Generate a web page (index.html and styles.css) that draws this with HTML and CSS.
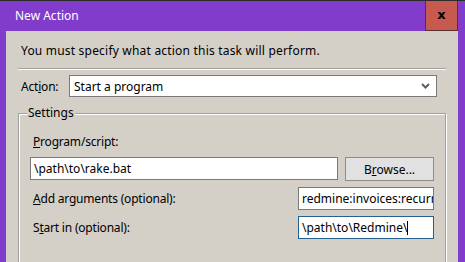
FILE: index.html
```html
<!DOCTYPE html>
<html>
<head>
  <link rel="stylesheet" href="styles.css">
</head>
<body>
  <div class="window">
    <div class="titlebar">
      <span class="title">New Action</span>
      <div class="close">x</div>
    </div>
    <div class="client">
      <p class="intro">You must specify what action this task will perform.</p>
      <div class="rule"></div>
      <div class="action-row">
        <span class="label">Act<u>i</u>on:</span>
        <div class="combo">
          <span>Start a program</span>
          <svg width="9" height="6" viewBox="0 0 9 6"><path d="M1 1 L4.5 4.5 L8 1" fill="none" stroke="#606060" stroke-width="2"/></svg>
        </div>
      </div>
      <fieldset class="settings">
        <legend>Settings</legend>
        <div class="label"><u>P</u>rogram/script:</div>
        <div class="row">
          <div class="field wide">\path\to\rake.bat</div>
          <button class="browse">B<u>r</u>owse...</button>
        </div>
        <div class="row">
          <span class="label"><u>A</u>dd arguments (optional):</span>
          <div class="field short">redmine:invoices:recurring</div>
        </div>
        <div class="row">
          <span class="label">S<u>t</u>art in (optional):</span>
          <div class="field short focus">\path\to\Redmine\<span class="caret"></span></div>
        </div>
      </fieldset>
    </div>
  </div>
</body>
</html>
```
FILE: styles.css
```css
html, body {
  margin: 0;
  height: 100%;
}

body {
  font-family: "Noto Sans", sans-serif;
  font-size: 12px;
  color: #000;
  background: #823ccb;
  overflow: hidden;
}

.window {
  display: flex;
  flex-direction: column;
  height: 100%;
  border-top: 1px solid #2b2b2b;
  box-sizing: border-box;
}

.titlebar {
  display: flex;
  justify-content: space-between;
  align-items: center;
  height: 30px;
  padding-left: 15px;
  padding-right: 7px;
}

.title {
  color: #fff;
  line-height: 16px;
  padding-bottom: 1px;
}

.close {
  align-self: flex-start;
  width: 31px;
  height: 26px;
  padding-bottom: 3px;
  background: #c65a4f;
  border: 1px solid #5b3030;
  border-top: none;
  display: flex;
  align-items: center;
  justify-content: center;
  font-family: "DejaVu Sans", sans-serif;
  font-weight: bold;
  font-size: 13px;
  line-height: 1;
}

.client {
  flex: 1;
  margin: 0 7px 0 6px;
  background: #d4d0c8;
  padding: 12px 12px 0 12px;
}

.intro {
  margin: 0 0 0 3px;
  line-height: 16px;
  letter-spacing: 0.2px;
}

.rule {
  margin-top: 9px;
  height: 0;
  border-top: 1px solid #a0a0a0;
  border-bottom: 1px solid #fff;
}

.action-row {
  display: flex;
  align-items: center;
  margin-top: 5px;
  padding-left: 3px;
  padding-right: 9px;
}

.action-row .label {
  width: 48px;
}

.combo {
  flex: 1;
  height: 20px;
  background: #fff;
  border: 1px solid #7a7a7a;
  display: flex;
  align-items: center;
  justify-content: space-between;
  padding: 0 6px 0 4px;
}

.settings {
  margin: 8px 0 0 0;
  padding: 13px 12px 30px 11px;
  border: 1px solid #a0a0a0;
  box-shadow: inset 1px 1px 0 #fff, 1px 1px 0 #fff;
  min-width: 0;
}

.settings legend {
  padding: 0 1px;
  margin-left: -3px;
  line-height: 16px;
  background: #d4d0c8;
}

.settings > .label {
  line-height: 16px;
  padding-left: 3px;
}

.label {
  letter-spacing: -0.2px;
}

.row {
  display: flex;
  align-items: center;
  justify-content: space-between;
  margin-top: 6px;
}

.row:first-of-type {
  margin-top: 5px;
}

.row .label {
  padding-left: 3px;
}

.field {
  height: 21px;
  line-height: 21px;
  background: #fff;
  border: 1px solid #7a7a7a;
  padding: 0 3px;
  white-space: nowrap;
  overflow: hidden;
  box-sizing: content-box;
}

.wide {
  width: 300px;
}

.short {
  width: 128px;
  margin-right: -1px;
}

.focus {
  border-color: #26608f;
}

.caret {
  display: inline-block;
  width: 1px;
  height: 14px;
  background: #000;
  vertical-align: -3px;
}

.browse {
  width: 89px;
  height: 24px;
  margin-right: -1px;
  margin-top: 1px;
  background: #e1e1e1;
  border: 1px solid #8c8c8c;
  font-family: inherit;
  font-size: 12px;
  color: #000;
  padding: 0;
}
```
